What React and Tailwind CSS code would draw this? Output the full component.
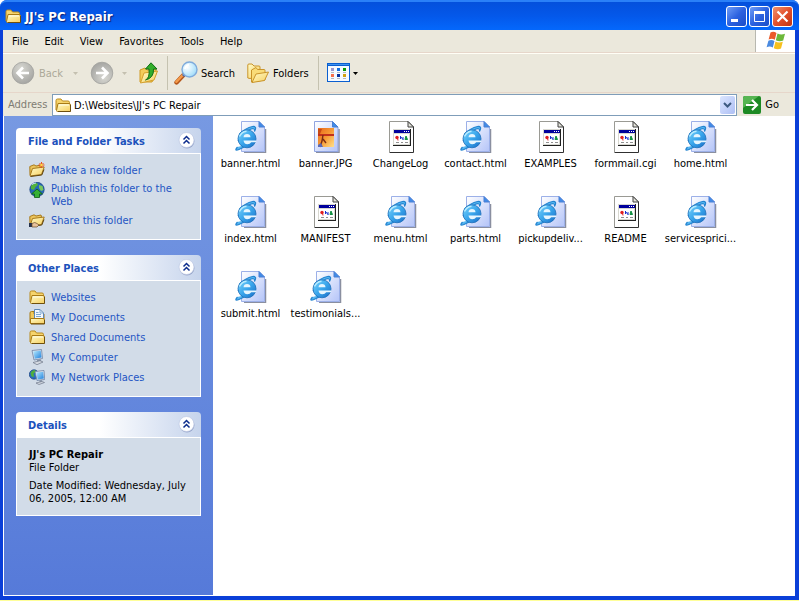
import { useState } from "react";

const menus = ["File", "Edit", "View", "Favorites", "Tools", "Help"];

const files = [
  { name: "banner.html", type: "html" },
  { name: "banner.JPG", type: "image" },
  { name: "ChangeLog", type: "generic" },
  { name: "contact.html", type: "html" },
  { name: "EXAMPLES", type: "generic" },
  { name: "formmail.cgi", type: "generic" },
  { name: "home.html", type: "html" },
  { name: "index.html", type: "html" },
  { name: "MANIFEST", type: "generic" },
  { name: "menu.html", type: "html" },
  { name: "parts.html", type: "html" },
  { name: "pickupdeliv...", type: "html" },
  { name: "README", type: "generic" },
  { name: "servicesprici...", type: "html" },
  { name: "submit.html", type: "html" },
  { name: "testimonials...", type: "html" },
];

/* ---------- shared gradients ---------- */

const Gradients = () => (
  <svg className="absolute w-0 h-0" aria-hidden="true">
    <defs>
      <linearGradient id="folder" x1="0" y1="0" x2="1" y2="1">
        <stop offset="0" stopColor="#fffbc8" />
        <stop offset="1" stopColor="#f6cf60" />
      </linearGradient>
      <linearGradient id="page" x1="0" y1="0" x2="1" y2="1">
        <stop offset="0" stopColor="#ffffff" />
        <stop offset="1" stopColor="#b4c4f8" />
      </linearGradient>
      <linearGradient id="ie" x1="0" y1="0" x2="1" y2="1">
        <stop offset="0" stopColor="#7cd6fc" />
        <stop offset="0.5" stopColor="#3aa6ec" />
        <stop offset="1" stopColor="#1a6cc6" />
      </linearGradient>
      <radialGradient id="lens" cx="0.35" cy="0.35" r="0.7">
        <stop offset="0" stopColor="#ffffff" />
        <stop offset="1" stopColor="#9fdcfa" />
      </radialGradient>
      <radialGradient id="disc" cx="0.4" cy="0.3" r="0.75">
        <stop offset="0" stopColor="#d8d8d2" />
        <stop offset="1" stopColor="#a3a3a0" />
      </radialGradient>
      <linearGradient id="sunset" x1="0" y1="0" x2="1" y2="1">
        <stop offset="0" stopColor="#e8681c" />
        <stop offset="0.5" stopColor="#f79a34" />
        <stop offset="1" stopColor="#ffe08a" />
      </linearGradient>
      <linearGradient id="screen" x1="0" y1="0" x2="1" y2="1">
        <stop offset="0" stopColor="#b8ecff" />
        <stop offset="1" stopColor="#1f7fdc" />
      </linearGradient>
    </defs>
  </svg>
);

/* ---------- small icons ---------- */

const FolderIcon = () => (
  <svg width="16" height="16" viewBox="0 0 16 16" className="shrink-0" aria-hidden="true">
    <path d="M1 13V3.500Q1 2 2.500 2H6L7.500 4H13Q14.500 4 14.500 5.500V7" fill="#f6d46c" stroke="#b98a1c" />
    <path d="M3 6.500H14Q15.500 6.500 15.500 8V13.500Q15.500 14.500 14.500 14.500H2.500Q1.500 14.500 1.500 13.500Z" fill="url(#folder)" stroke="#a87a14" />
    <path d="M4 8H14" stroke="#fffde4" />
    <path d="M15.500 8V14.500H3" fill="none" stroke="#6e4f0c" />
  </svg>
);

const OpenFolder = ({ children }) => (
  <svg width="16" height="16" viewBox="0 0 16 16" className="shrink-0" aria-hidden="true">
    <path d="M1 13L.8 4.500L5 2.800L7 4L12 3L13 7" fill="#ecc45c" stroke="#a87a1c" />
    <path d="M1 14L3.500 6.500L15.200 5L12.500 12.500Z" fill="url(#folder)" stroke="#a87a1c" strokeLinejoin="round" />
    <path d="M1.500 14.500L12.800 13L15 7.500" fill="none" stroke="#5e430c" />
    {children}
  </svg>
);

const NewFolderIcon = () => (
  <OpenFolder>
    <path d="M12.500 0V6M9.500 3H15.500M10.500 1L14.500 5M14.500 1L10.500 5" stroke="#e8501c" />
    <circle cx="12.500" cy="3" r="1.300" fill="#ffd84a" />
  </OpenFolder>
);

const ShareFolderIcon = () => (
  <OpenFolder>
    <path d="M0 11H3V15H0Z" fill="#25314c" />
    <path d="M3 11.500Q6 9.500 8 11.500L10 13L8 15H3Z" fill="#e8c39c" stroke="#6b4a26" strokeWidth=".7" />
  </OpenFolder>
);

const PublishIcon = () => (
  <svg width="16" height="16" viewBox="0 0 16 16" className="shrink-0" aria-hidden="true">
    <circle cx="8" cy="7.500" r="7.200" fill="#2468b8" stroke="#143c78" strokeWidth=".7" />
    <path d="M2 4Q4 1 8 1L9 3L6.500 5L5 8L2 7Z" fill="#52b23c" />
    <path d="M10 3L13.500 4L14.500 8L12 9L10 6Z" fill="#7cc85a" />
    <path d="M3 2.500Q5 1 7 1" stroke="#cde9ff" fill="none" />
    <path d="M8 7L13.500 12H10.500V15.500H5.500V12H2.500Z" fill="#35b034" stroke="#0c5c14" strokeWidth=".8" />
  </svg>
);

const DocumentsIcon = () => (
  <svg width="16" height="16" viewBox="0 0 16 16" className="shrink-0" aria-hidden="true">
    <path d="M1 14V4Q1 2.500 2.500 2.500H5V5H15V14Z" fill="#f1c95c" stroke="#a87a14" />
    <path d="M5.500 10V.5H11L14.500 4V10Z" fill="#f4f9ff" stroke="#5c86b4" />
    <path d="M11 .5V4H14.500M7 3.500H9.500M7 5.500H12M7 7.500H12" stroke="#7fa8cf" fill="none" />
    <path d="M1.500 9.500H14Q15.500 9.500 15.500 11V14.500H1.500Z" fill="url(#folder)" stroke="#a87a14" />
    <path d="M15.500 11V15H2" fill="none" stroke="#6e4f0c" />
  </svg>
);

const ComputerIcon = () => (
  <svg width="16" height="16" viewBox="0 0 16 16" className="shrink-0" aria-hidden="true">
    <path d="M3 1.500L12.500 .5L13.500 9.500L5 11Z" fill="#d9e2ee" stroke="#6f83a3" strokeWidth=".8" />
    <path d="M4.200 2.600L11.800 1.600L12.500 8.600L5.800 9.800Z" fill="url(#screen)" />
    <path d="M8 10.500L11.500 10L12.500 12.500L8 13Z" fill="#8b98ac" />
    <path d="M4 13.500L11 11.700L14 13L8 15.700Z" fill="#d5dae2" stroke="#6d7789" strokeWidth=".7" />
  </svg>
);

const NetworkIcon = () => (
  <svg width="16" height="16" viewBox="0 0 16 16" className="shrink-0" aria-hidden="true">
    <circle cx="5" cy="5.500" r="4.700" fill="#2a6cc0" stroke="#153f7c" strokeWidth=".7" />
    <path d="M1.500 4Q3 1 6 1L7 3L4.500 4.500L5 8L2.500 7.500Z" fill="#4fb03c" />
    <path d="M6 2.500L15 1.500L15.700 10.500L8 11.500Z" fill="#d9e2ee" stroke="#6f83a3" strokeWidth=".8" />
    <path d="M7.200 3.500L14.200 2.700L14.800 9.600L8.800 10.400Z" fill="url(#screen)" />
    <path d="M10.500 11L13 10.700V13H10.500Z" fill="#8b98ac" />
    <path d="M7 14L13 12.500L15.500 13.500L10 15.500Z" fill="#d5dae2" stroke="#6d7789" strokeWidth=".7" />
  </svg>
);

/* ---------- toolbar icons ---------- */

const DiscArrow = ({ flip }) => (
  <svg width="24" height="24" viewBox="0 0 24 24" className={flip ? "rotate-180" : ""} aria-hidden="true">
    <circle cx="12" cy="12" r="10.800" fill="url(#disc)" stroke="#a2a29e" strokeWidth=".8" />
    <path d="M18 12H7M12 6.500L6.500 12L12 17.500" fill="none" stroke="#fff" strokeWidth="2.600" />
  </svg>
);

const UpFolderIcon = () => (
  <svg width="20" height="22" viewBox="0 0 20 22" aria-hidden="true">
    <path d="M1 20V8L6 6L8 8L17 7V12L13 20Z" fill="#f3cc5a" stroke="#cf9a24" />
    <path d="M1.500 21L5 11L18.500 9L15 18Z" fill="url(#folder)" stroke="#d5a02c" strokeLinejoin="round" />
    <path d="M6.500 18Q11 16 10 7H6.500L12 .8L18 7H14.500Q15 16 6.500 18Z" fill="#33ae2a" stroke="#0f6e18" strokeLinejoin="round" />
  </svg>
);

const SearchIcon = () => (
  <svg width="24" height="24" viewBox="0 0 24 24" aria-hidden="true">
    <path d="M2.500 21.500L9.500 14" stroke="#b4561a" strokeWidth="4.400" strokeLinecap="round" />
    <path d="M2.300 20.800L9 13.800" stroke="#f49a4a" strokeWidth="2.400" strokeLinecap="round" />
    <path d="M9 15L11.500 12.500" stroke="#5470a8" strokeWidth="3" />
    <circle cx="15.500" cy="8.500" r="7.500" fill="url(#lens)" stroke="#7fabdc" strokeWidth="1.400" />
    <path d="M11 8Q11.500 4.500 15 3.800" fill="none" stroke="#fff" strokeWidth="1.600" />
  </svg>
);

const FoldersIcon = () => (
  <svg width="22" height="22" viewBox="0 0 22 22" aria-hidden="true">
    <path d="M.8 16V3Q.8 2 2 2H5L7 4H12Q13 4 13 5V14L3 16.500Z" fill="url(#folder)" stroke="#c9942a" />
    <path d="M4.500 20V8L9 5.500L10.500 7.500H17Q18 7.500 18 8.500V18Z" fill="#f9dc78" stroke="#c9942a" />
    <path d="M5 20.500L9 12L21.500 10L17.500 18.500Z" fill="url(#folder)" stroke="#c9942a" strokeLinejoin="round" />
  </svg>
);

const ViewsIcon = () => (
  <svg width="24" height="20" viewBox="0 0 24 20" shapeRendering="crispEdges" aria-hidden="true">
    <rect x="0" y="0" width="23" height="19" fill="#0a5fd0" />
    <rect x="1" y="3" width="21" height="15" fill="#f6faff" />
    <rect x="1" y="1" width="21" height="1" fill="#3f92f0" />
    <rect x="4" y="5" width="3" height="3" fill="#9c96cc" />
    <rect x="10" y="5" width="3" height="3" fill="#1470e0" />
    <rect x="16" y="5" width="3" height="3" fill="#0a9a0a" />
    <rect x="4" y="11" width="3" height="3" fill="#f8704a" />
    <rect x="10" y="11" width="3" height="3" fill="#0a34a0" />
    <rect x="16" y="11" width="3" height="3" fill="#d0a010" />
    <path d="M4 9.500H7M10 9.500H13M16 9.500H19M4 15.500H7M10 15.500H13M16 15.500H19" stroke="#b4b8c0" />
  </svg>
);

const DownArrow = ({ color = "#000" }) => (
  <svg width="5" height="3" viewBox="0 0 5 3" aria-hidden="true">
    <path d="M0 0H5L2.500 3Z" fill={color} />
  </svg>
);

const WindowsFlag = () => (
  <svg width="20" height="20" viewBox="0 0 20 20" aria-hidden="true">
    <path d="M4.500 1.500Q7.500 -.2 10.500 2L8.800 8.800Q6 7 2.600 8.500Z" fill="#ea5a2a" />
    <path d="M11.500 2.500Q15 4.500 19 2.800L17.200 9.500Q13.500 11 9.800 9.200Z" fill="#6cb83a" />
    <path d="M2.400 9.700Q5.500 8 8.500 10L6.800 16.500Q4 14.800 .6 16.200Z" fill="#4a8ae0" />
    <path d="M9.500 10.600Q13 12.300 16.800 10.800L15 17.600Q11.500 19.200 7.800 17.200Z" fill="#f6c01e" />
  </svg>
);

/* ---------- file icons ---------- */

const HtmlFile = () => (
  <svg width="32" height="32" viewBox="0 0 32 32" aria-hidden="true">
    <path d="M9 31.500H30.500V8" fill="none" stroke="#8a8fa0" strokeWidth="1.500" />
    <path d="M6.500 .5H24L29.500 6V30.500H6.500Z" fill="url(#page)" stroke="#9cb0e8" />
    <path d="M24 .5V6H29.500Z" fill="#3f8ce8" stroke="#4a7fd4" />
    <path
      d="M2.500 26Q-1.500 30.500 4 28.500Q8 27 12 23.500M3 20Q8.500 11.500 16 8Q20 6.500 19.500 10.500Q22.500 5 17.500 5.500Q10.500 7 4.500 13"
      fill="#56b6f0"
      stroke="#2484d0"
      strokeWidth="1.200"
    />
    <circle cx="12" cy="17.800" r="9" fill="url(#ie)" stroke="#1a6cb8" strokeWidth=".8" />
    <path d="M8.500 16.300Q8.800 13 12 13Q15.300 13 15.500 16.300Z" fill="#e6f6ff" />
    <path d="M8.500 19.500H21.200V21.200H16.200Q15 23.200 12.300 23.200Q9 23.200 8.500 19.500Z" fill="#e6f6ff" />
    <path d="M4.500 15.500Q6.500 10.800 11.500 10.200" fill="none" stroke="#b9ecff" strokeWidth="1.400" />
  </svg>
);

const ImageFile = () => (
  <svg width="32" height="32" viewBox="0 0 32 32" aria-hidden="true">
    <path d="M6 31.500H29V8" fill="none" stroke="#8a8fa0" strokeWidth="1.500" />
    <path d="M4.500 .5H22.500L28 6V30.500H4.500Z" fill="url(#page)" stroke="#8fa4e0" />
    <path d="M22.500 .5V6H28Z" fill="#3f8ce8" stroke="#4a7fd4" />
    <rect x="8" y="7" width="16" height="19" fill="url(#sunset)" />
    <path d="M8 14H24" stroke="#c2301c" strokeWidth="2" />
    <path d="M13 14L12 20L10 26M13 18L16 22" stroke="#7a2c14" strokeWidth="1.400" fill="none" />
    <path d="M8 8H12L10 13H8Z" fill="#c84a14" />
    <path d="M8 24L11 22L13 26H8Z" fill="#5a6ab8" />
  </svg>
);

const GenericFile = () => (
  <svg width="32" height="32" viewBox="0 0 32 32" aria-hidden="true">
    <path d="M4.500 .5H23L28.500 6V31H4.500Z" fill="#fff" />
    <path d="M4.500 31V.5H23" fill="none" stroke="#9a9a94" />
    <path d="M23 .5L28.500 6V31.500H4.500" fill="none" stroke="#303030" />
    <path d="M23 .5V6H28.500Z" fill="#e4e4dc" stroke="#404040" />
    <g shapeRendering="crispEdges">
      <rect x="8" y="8" width="18" height="17" fill="#202020" />
      <rect x="8" y="8" width="17" height="16" fill="#d8d8d0" />
      <rect x="9" y="9" width="16" height="3" fill="#00009c" />
      <path d="M19 10.500H20M21 10.500H22M23 10.500H24" stroke="#fff" />
      <rect x="9" y="13" width="15" height="10" fill="#fff" />
      <path d="M11 21.500H14M16 21.500H18M20 21.500H23" stroke="#909090" />
    </g>
    <circle cx="12" cy="16.500" r="1.700" fill="#e02020" />
    <path d="M12.500 17L13 19.500" stroke="#e02020" />
    <path d="M15.500 15.500L18 18.500M15.500 15V18M18 16V19" stroke="#1830d0" />
    <path d="M21 15L22.500 18.500H20Z" fill="#109040" stroke="#109040" />
  </svg>
);

const fileIcons = { html: HtmlFile, image: ImageFile, generic: GenericFile };

/* ---------- window parts ---------- */

const CaptionButton = ({ label, close, children }) => (
  <button
    aria-label={label}
    className={`flex h-[21px] w-[21px] items-center justify-center rounded-[3px] border border-white ${
      close
        ? "bg-linear-to-br from-[#f0906c] via-[#e2502c] to-[#c03410]"
        : "bg-linear-to-br from-[#6f9cf6] via-[#2c62e0] to-[#1a4cc8]"
    }`}
  >
    <svg width="19" height="19" viewBox="0 0 19 19" aria-hidden="true">
      {children}
    </svg>
  </button>
);

const TitleBar = () => (
  <header className="flex h-[30px] items-center rounded-t-[7px] border-t-2 border-[#2a80f8] bg-linear-to-b from-[#0450dc] via-[#0458ea] to-[#0468fc] pr-[6px] pl-[5px]">
    <FolderIcon />
    <h1 className="ml-1 grow pt-px text-[13px] leading-4 font-bold text-white [text-shadow:1px_1px_1px_#0a1f7a]">
      JJ's PC Repair
    </h1>
    <div className="flex gap-[2px] pt-px">
      <CaptionButton label="Minimize">
        <path d="M4 13.500H11" stroke="#fff" strokeWidth="3" />
      </CaptionButton>
      <CaptionButton label="Maximize">
        <path d="M4.500 4.500H14.500V14.500H4.500Z" fill="none" stroke="#fff" />
        <path d="M4 5.500H15" stroke="#fff" strokeWidth="3" />
      </CaptionButton>
      <CaptionButton label="Close" close>
        <path d="M4.500 4.500L14.500 14.500M14.500 4.500L4.500 14.500" stroke="#fff" strokeWidth="2.200" />
      </CaptionButton>
    </div>
  </header>
);

const MenuBar = () => (
  <div className="flex h-[23px] border-b border-[#e6d6ca]">
    <nav className="flex grow items-center pl-[1px]">
      {menus.map((menu) => (
        <button key={menu} className="px-2">
          {menu}
        </button>
      ))}
    </nav>
    <div className="flex w-10 items-center justify-center border-l border-[#b8b8b0] bg-white">
      <WindowsFlag />
    </div>
  </div>
);

const Separator = () => <div className="h-[34px] w-px bg-[#c5c2b0]" />;

const Toolbar = () => (
  <div className="flex h-10 items-center border-t border-b border-t-[#fffef6] border-b-[#e6d6ca] pl-2">
    <button disabled className="flex items-center gap-1 text-[#aca899]">
      <DiscArrow /> Back
    </button>
    <button disabled aria-label="Back history" className="ml-2 p-[2px]">
      <DownArrow color="#c4c0b0" />
    </button>
    <button disabled aria-label="Forward" className="ml-[10px]">
      <DiscArrow flip />
    </button>
    <button disabled aria-label="Forward history" className="ml-[6px] p-[2px]">
      <DownArrow color="#c4c0b0" />
    </button>
    <button aria-label="Up" className="mr-[6px] ml-2 px-[2px]">
      <UpFolderIcon />
    </button>
    <Separator />
    <button className="ml-[6px] flex items-center gap-[3px]">
      <SearchIcon /> Search
    </button>
    <button className="mr-[9px] ml-3 flex items-center gap-1">
      <FoldersIcon /> Folders
    </button>
    <Separator />
    <button aria-label="Views" className="ml-2 flex items-center gap-[2px]">
      <ViewsIcon /> <DownArrow />
    </button>
  </div>
);

const AddressBar = () => {
  const [path, setPath] = useState("D:\\Websites\\JJ's PC Repair");

  return (
    <form className="flex h-[23px] items-center pl-1" onSubmit={(e) => e.preventDefault()}>
      <label htmlFor="address" className="w-[45px] shrink-0 pl-[1px] text-[#7f7c73]">
        Address
      </label>
      <div className="flex h-[22px] grow items-center border border-[#7f9db9] bg-white pr-px pl-[2px]">
        <FolderIcon />
        <input
          id="address"
          value={path}
          onChange={(e) => setPath(e.target.value)}
          className="ml-[3px] min-w-0 grow bg-white pt-px outline-none"
        />
        <button
          type="button"
          aria-label="Show addresses"
          className="flex h-[18px] w-[15px] items-center justify-center rounded-[2px] bg-linear-to-br from-[#dce6ff] to-[#aebff4]"
        >
          <svg width="9" height="6" viewBox="0 0 9 6" aria-hidden="true">
            <path d="M1 1L4.500 4.500L8 1" fill="none" stroke="#3d5a80" strokeWidth="2" />
          </svg>
        </button>
      </div>
      <button type="submit" className="mr-4 ml-[6px] flex items-center gap-1">
        <svg width="18" height="18" viewBox="0 0 18 18" aria-hidden="true">
          <rect width="18" height="18" rx="2" fill="#1d8a24" />
          <path d="M0 2Q0 0 2 0H16L0 12Z" fill="#56b552" />
          <path d="M3 9H14M9 4L14 9L9 14" fill="none" stroke="#fff" strokeWidth="2.200" />
        </svg>
        Go
      </button>
    </form>
  );
};

const Panel = ({ title, children }) => {
  const [open, setOpen] = useState(true);

  return (
    <section>
      <button
        aria-expanded={open}
        onClick={() => setOpen(!open)}
        className="flex h-[25px] w-full items-center justify-between rounded-t-[4px] bg-linear-to-r from-white from-45% to-[#c6d4ec] pr-[6px] pl-3 font-bold text-[#1c52bc]"
      >
        <span className="pt-[2px]">{title}</span>
        <svg width="17" height="17" viewBox="0 0 17 17" aria-hidden="true" className={open ? "" : "rotate-180"}>
          <circle cx="9" cy="9" r="7.500" fill="#9aa8cc" />
          <circle cx="8.500" cy="8" r="7.500" fill="#fff" stroke="#b8c4e0" strokeWidth=".6" />
          <path d="M5.500 7.500L8.500 4.500L11.500 7.500M5.500 11.500L8.500 8.500L11.500 11.500" fill="none" stroke="#0c2c8c" strokeWidth="1.500" />
        </svg>
      </button>
      {open && <div className="border border-white bg-[#d2dce8]">{children}</div>}
    </section>
  );
};

const TaskLink = ({ icon, children }) => (
  <li>
    <a href="#" className="flex min-h-4 gap-[6px] text-[#1f56c4] hover:underline">
      {icon}
      <span className="self-center">{children}</span>
    </a>
  </li>
);

const Sidebar = () => (
  <aside className="flex w-[210px] shrink-0 flex-col gap-[15px] border-b border-l border-white bg-linear-to-b from-[#7799e2] to-[#567ad9] px-3 pt-3">
    <Panel title="File and Folder Tasks">
      <ul className="flex flex-col gap-1 px-3 pt-2 pb-[11px]">
        <TaskLink icon={<NewFolderIcon />}>Make a new folder</TaskLink>
        <TaskLink icon={<PublishIcon />}>Publish this folder to the Web</TaskLink>
        <TaskLink icon={<ShareFolderIcon />}>Share this folder</TaskLink>
      </ul>
    </Panel>
    <Panel title="Other Places">
      <ul className="flex flex-col gap-1 px-3 pt-2 pb-[11px]">
        <TaskLink icon={<FolderIcon />}>Websites</TaskLink>
        <TaskLink icon={<DocumentsIcon />}>My Documents</TaskLink>
        <TaskLink icon={<FolderIcon />}>Shared Documents</TaskLink>
        <TaskLink icon={<ComputerIcon />}>My Computer</TaskLink>
        <TaskLink icon={<NetworkIcon />}>My Network Places</TaskLink>
      </ul>
    </Panel>
    <Panel title="Details">
      <div className="py-[10px] pr-2 pl-3">
        <p className="font-bold">JJ's PC Repair</p>
        <p>File Folder</p>
        <p className="mt-[5px]">Date Modified: Wednesday, July 06, 2005, 12:00 AM</p>
      </div>
    </Panel>
  </aside>
);

const FileGrid = () => (
  <ul className="grid grow auto-rows-[75px] grid-cols-[repeat(auto-fill,75px)] content-start bg-white pt-[5px]">
    {files.map(({ name, type }) => {
      const Icon = fileIcons[type];
      return (
        <li key={name}>
          <button className="flex w-full flex-col items-center gap-1 whitespace-nowrap">
            <Icon />
            {name}
          </button>
        </li>
      );
    })}
  </ul>
);

export default function App() {
  return (
    <div className="flex min-h-screen flex-col border-b border-[#ffff99] bg-white font-['DejaVu_Sans_Condensed','Noto_Sans',sans-serif] text-[11px] leading-[13px] text-black">
      <Gradients />
      <div className="flex grow flex-col rounded-t-[7px] bg-[#0a3fd8]">
        <TitleBar />
        <div className="mr-1 mb-1 ml-[3px] flex grow flex-col bg-[#ebe8dc]">
          <MenuBar />
          <Toolbar />
          <AddressBar />
          <main className="flex grow">
            <Sidebar />
            <FileGrid />
          </main>
        </div>
      </div>
    </div>
  );
}
